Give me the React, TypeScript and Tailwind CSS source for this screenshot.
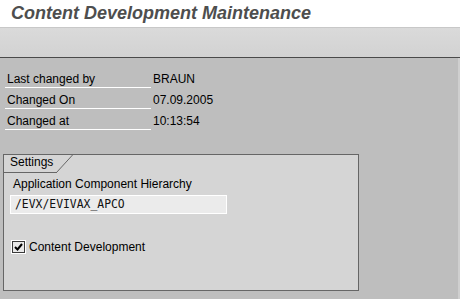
export default function App() {
  const rows = [
    { label: "Last changed by", value: "BRAUN" },
    { label: "Changed On", value: "07.09.2005" },
    { label: "Changed at", value: "10:13:54" },
  ];

  return (
    <div
      className="relative w-[460px] h-[299px] overflow-hidden bg-[#bebebe] text-[12px] text-black"
      style={{ fontFamily: '"Liberation Sans", Arial, sans-serif' }}
    >
      {/* Title */}
      <div className="h-[28px] bg-white border-b border-[#c8c8c8] pl-[11px] pt-[1px] text-[18px] leading-[25px] font-bold italic text-[#4e4e4e]">
        Content Development Maintenance
      </div>

      {/* Toolbar */}
      <div className="h-[30px] bg-gradient-to-b from-[#dadada] to-[#d2d2d2] border-b border-[#4a4a4a]" />

      {/* Header fields */}
      <div className="pt-[10px] flex flex-col gap-[1px]">
        {rows.map((r) => (
          <div key={r.label} className="flex items-end h-[20px]">
            <div className="ml-[5px] w-[146px] h-full flex items-end pb-[1px] pl-[2px] border-b border-white leading-[14px]">
              {r.label}
            </div>
            <div className="pl-[2px] pb-[2px] leading-[14px]">{r.value}</div>
          </div>
        ))}
      </div>

      {/* Settings frame */}
      <div className="ml-[3px] mt-[24px] w-[356px] h-[137px] border border-[#666666] bg-[#d5d5d5]">
        <div className="relative w-[53px] h-[18px] border-b border-[#666666] pl-[6px] leading-[15px]">
          Settings
          <svg
            className="absolute left-[52px] top-[-1px]"
            width="18"
            height="19"
            viewBox="0 0 18 19"
          >
            <line x1="0.5" y1="18.5" x2="17" y2="0.5" stroke="#666666" strokeWidth="1" />
          </svg>
        </div>
        <div className="ml-[9px] mt-[4px] leading-[14px]">Application Component Hierarchy</div>
        <div
          className="ml-[6px] mt-[4px] w-[217px] h-[19px] border border-white bg-[#ebebeb] pl-[4px] text-[11.4px] leading-[17px] text-[#111]"
          style={{ fontFamily: '"DejaVu Sans Mono", "Liberation Mono", monospace' }}
        >
          /EVX/EVIVAX_APCO
        </div>
        <div className="ml-[7px] mt-[26px] flex items-center gap-[3px]">
          <div className="w-[15px] h-[14px] border border-white">
            <div className="w-full h-full border border-[#3a3a3a] bg-[#e8e8e8] flex items-center justify-center">
              <svg width="9" height="8" viewBox="0 0 9 8">
                <path d="M1 4 L3.5 6.5 L8 1" fill="none" stroke="#000" strokeWidth="2" />
              </svg>
            </div>
          </div>
          <span className="leading-[14px]">Content Development</span>
        </div>
      </div>

      {/* Right edge strip */}
      <div className="absolute right-0 top-[58px] bottom-0 w-[2px] bg-[#cfcfcf]" />
    </div>
  );
}
